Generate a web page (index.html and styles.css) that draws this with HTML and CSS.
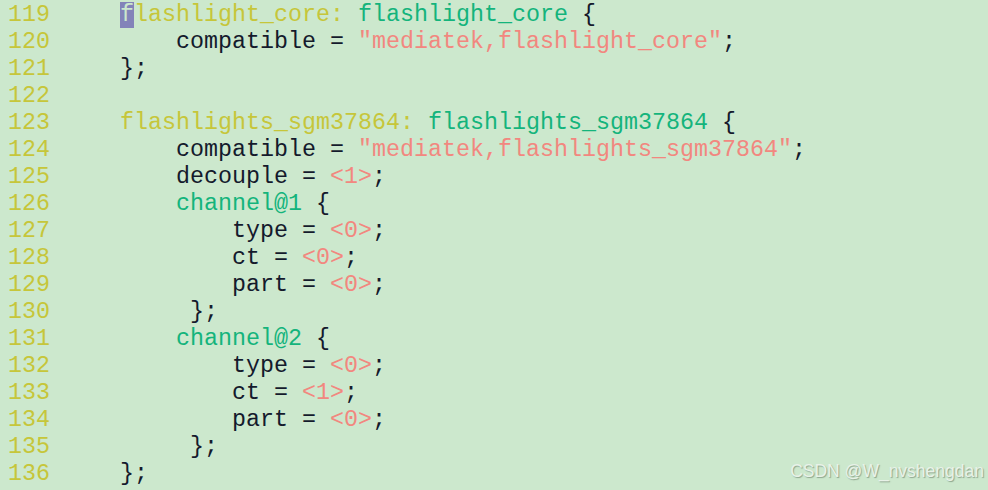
FILE: index.html
```html
<!DOCTYPE html>
<html>
<head>
<meta charset="utf-8">
<link rel="stylesheet" href="styles.css">
</head>
<body>
<div class="editor">
<pre class="code"><span class="ln">119</span>     <span class="cur">f</span><span class="lb">lashlight_core:</span> <span class="nd">flashlight_core</span> {
<span class="ln">120</span>         compatible = <span class="st">"mediatek,flashlight_core"</span>;
<span class="ln">121</span>     };
<span class="ln">122</span>
<span class="ln">123</span>     <span class="lb">flashlights_sgm37864:</span> <span class="nd">flashlights_sgm37864</span> {
<span class="ln">124</span>         compatible = <span class="st">"mediatek,flashlights_sgm37864"</span>;
<span class="ln">125</span>         decouple = <span class="st">&lt;1&gt;</span>;
<span class="ln">126</span>         <span class="nd">channel@1</span> {
<span class="ln">127</span>             type = <span class="st">&lt;0&gt;</span>;
<span class="ln">128</span>             ct = <span class="st">&lt;0&gt;</span>;
<span class="ln">129</span>             part = <span class="st">&lt;0&gt;</span>;
<span class="ln">130</span>          };
<span class="ln">131</span>         <span class="nd">channel@2</span> {
<span class="ln">132</span>             type = <span class="st">&lt;0&gt;</span>;
<span class="ln">133</span>             ct = <span class="st">&lt;1&gt;</span>;
<span class="ln">134</span>             part = <span class="st">&lt;0&gt;</span>;
<span class="ln">135</span>          };
<span class="ln">136</span>     };</pre>
<div class="wm">CSDN @W_nvshengdan</div>
</div>
</body>
</html>
```
FILE: styles.css
```css
html, body {
  margin: 0;
  padding: 0;
  background: #cce8cd;
}
.editor {
  position: relative;
  width: 988px;
  height: 490px;
  overflow: hidden;
  background: #cce8cd;
}
.code {
  margin: 0;
  padding: 2px 0 0 8px;
  font-family: "Courier New", "Liberation Mono", monospace;
  font-size: 23.33px;
  line-height: 27px;
  color: #141a2c;
}
.ln { color: #c6c63a; }
.lb { color: #c6c63a; }
.nd { color: #14b47c; }
.st { color: #f2877f; }
.cur {
  background: #8383b9;
  color: #cce8cd;
}
.wm {
  position: absolute;
  right: 4px;
  bottom: 8px;
  font-family: "Liberation Sans", Arial, sans-serif;
  font-size: 17.5px;
  color: #e8f2e8;
  text-shadow: 1px 1px 1px rgba(90, 110, 90, 0.55);
}
```
